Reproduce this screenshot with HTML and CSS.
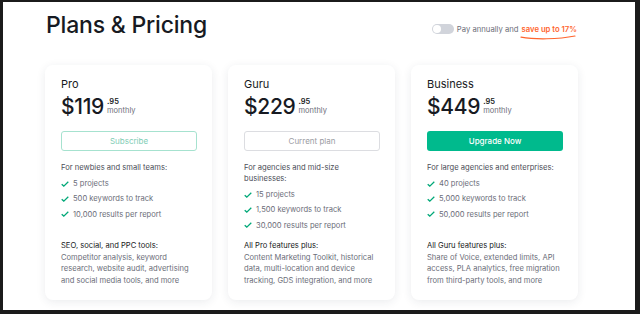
FILE: index.html
```html
<!DOCTYPE html>
<html lang="en">
<head>
    <meta charset="UTF-8">
    <meta name="viewport" content="width=device-width, initial-scale=1.0">
    <title>Plans &amp; Pricing</title>
    <link rel="stylesheet" href="styles.css">
</head>
<body>
    <div class="frame">
        <div class="header">
            <h1>Plans &amp; Pricing</h1>
            <div class="billing">
                <span class="toggle"><span class="knob"></span></span>
                <span>Pay annually and</span>
                <span class="save">save up to 17%
                    <svg class="swoosh" width="56" height="5" viewBox="0 0 56 5">
                        <path d="M1 2.2 C 15 4.6, 38 4.4, 55 1" fill="none" stroke="#ff642d" stroke-width="1.2" stroke-linecap="round"/>
                    </svg>
                </span>
            </div>
        </div>

        <div class="plans">
            <div class="card">
                <div class="plan-name">Pro</div>
                <div class="price">
                    <span class="amount">$119</span>
                    <span class="cents"><b>.95</b>monthly</span>
                </div>
                <button class="btn btn-outline" type="button">Subscribe</button>
                <p class="intro">For newbies and small teams:</p>
                <ul class="features">
                    <li><svg width="8" height="6" viewBox="0 0 8 6"><path d="M0.7 3.2 L2.8 5.1 L7.3 0.8" fill="none" stroke="#00a878" stroke-width="1.3"/></svg>5 projects</li>
                    <li><svg width="8" height="6" viewBox="0 0 8 6"><path d="M0.7 3.2 L2.8 5.1 L7.3 0.8" fill="none" stroke="#00a878" stroke-width="1.3"/></svg>500 keywords to track</li>
                    <li><svg width="8" height="6" viewBox="0 0 8 6"><path d="M0.7 3.2 L2.8 5.1 L7.3 0.8" fill="none" stroke="#00a878" stroke-width="1.3"/></svg>10,000 results per report</li>
                </ul>
                <div class="tools">
                    <div class="tools-title">SEO, social, and PPC tools:</div>
                    <p>Competitor analysis, keyword research, website audit, advertising and social media tools, and more</p>
                </div>
            </div>

            <div class="card">
                <div class="plan-name">Guru</div>
                <div class="price">
                    <span class="amount">$229</span>
                    <span class="cents"><b>.95</b>monthly</span>
                </div>
                <button class="btn btn-current" type="button">Current plan</button>
                <p class="intro">For agencies and mid-size businesses:</p>
                <ul class="features">
                    <li><svg width="8" height="6" viewBox="0 0 8 6"><path d="M0.7 3.2 L2.8 5.1 L7.3 0.8" fill="none" stroke="#00a878" stroke-width="1.3"/></svg>15 projects</li>
                    <li><svg width="8" height="6" viewBox="0 0 8 6"><path d="M0.7 3.2 L2.8 5.1 L7.3 0.8" fill="none" stroke="#00a878" stroke-width="1.3"/></svg>1,500 keywords to track</li>
                    <li><svg width="8" height="6" viewBox="0 0 8 6"><path d="M0.7 3.2 L2.8 5.1 L7.3 0.8" fill="none" stroke="#00a878" stroke-width="1.3"/></svg>30,000 results per report</li>
                </ul>
                <div class="tools">
                    <div class="tools-title">All Pro features plus:</div>
                    <p>Content Marketing Toolkit, historical data, multi-location and device tracking, GDS integration, and more</p>
                </div>
            </div>

            <div class="card">
                <div class="plan-name">Business</div>
                <div class="price">
                    <span class="amount">$449</span>
                    <span class="cents"><b>.95</b>monthly</span>
                </div>
                <button class="btn btn-primary" type="button">Upgrade Now</button>
                <p class="intro">For large agencies and enterprises:</p>
                <ul class="features">
                    <li><svg width="8" height="6" viewBox="0 0 8 6"><path d="M0.7 3.2 L2.8 5.1 L7.3 0.8" fill="none" stroke="#00a878" stroke-width="1.3"/></svg>40 projects</li>
                    <li><svg width="8" height="6" viewBox="0 0 8 6"><path d="M0.7 3.2 L2.8 5.1 L7.3 0.8" fill="none" stroke="#00a878" stroke-width="1.3"/></svg>5,000 keywords to track</li>
                    <li><svg width="8" height="6" viewBox="0 0 8 6"><path d="M0.7 3.2 L2.8 5.1 L7.3 0.8" fill="none" stroke="#00a878" stroke-width="1.3"/></svg>50,000 results per report</li>
                </ul>
                <div class="tools">
                    <div class="tools-title">All Guru features plus:</div>
                    <p>Share of Voice, extended limits, API access, PLA analytics, free migration from third-party tools, and more</p>
                </div>
            </div>
        </div>
    </div>
</body>
</html>
```

FILE: styles.css
```css
html, body {
    margin: 0;
    height: 100%;
}
body {
    background-color: #1b1b1b;
    font-family: Inter, "Noto Sans", Arial, sans-serif;
    color: #171a22;
    padding: 2px 5px 4px 3px;
    box-sizing: border-box;
}
.frame {
    background-color: #fff;
    height: 100%;
    padding: 0 58px 0 42px;
    box-sizing: border-box;
    overflow: hidden;
}
.header {
    display: flex;
    align-items: center;
    justify-content: space-between;
    height: 50px;
    padding-bottom: 13px;
}
h1 {
    margin: 0 0 0 1px;
    font-size: 23px;
    font-weight: 500;
    letter-spacing: -0.2px;
    padding-bottom: 4px;
}
.billing {
    display: flex;
    align-items: center;
    font-size: 7.7px;
    color: #6c6e79;
    padding-top: 4px;
}
.toggle {
    width: 22px;
    height: 10px;
    border-radius: 5px;
    background-color: #d1d4db;
    margin-right: 3px;
    position: relative;
}
.knob {
    position: absolute;
    left: 1px;
    top: 1px;
    width: 8px;
    height: 8px;
    border-radius: 50%;
    background-color: #fff;
}
.save {
    color: #ff642d;
    font-weight: 600;
    margin-left: 3px;
    position: relative;
}
.swoosh {
    position: absolute;
    left: -2px;
    top: 10px;
}
.plans {
    display: flex;
    gap: 16px;
}
.card {
    width: 167px;
    height: 235px;
    box-sizing: border-box;
    padding: 12px 15px 14px 16px;
    border-radius: 8px;
    background-color: #fff;
    box-shadow: 0 2px 10px rgba(30, 40, 70, 0.09);
    display: flex;
    flex-direction: column;
}
.plan-name {
    font-size: 11px;
    line-height: 14px;
}
.price {
    display: flex;
    align-items: flex-start;
    margin-top: 4px;
}
.amount {
    font-size: 21px;
    line-height: 24px;
    font-weight: 500;
    letter-spacing: -0.3px;
}
.cents {
    display: flex;
    flex-direction: column;
    font-size: 7.5px;
    line-height: 9px;
    color: #6c6e79;
    margin: 2px 0 0 3px;
}
.cents b {
    color: #171a22;
    font-weight: 600;
}
.btn {
    width: 136px;
    height: 20px;
    margin-top: 12px;
    border-radius: 3px;
    font-family: inherit;
    font-size: 8px;
    padding: 0;
    background: #fff;
}
.btn-outline {
    border: 1px solid #a6e2cf;
    color: #7fcdb5;
}
.btn-current {
    border: 1px solid #dcdde1;
    color: #9b9ca3;
}
.btn-primary {
    border: none;
    background-color: #00ba8d;
    color: #fff;
    font-weight: 500;
}
.intro {
    margin: 11px 0 0;
    font-size: 7.6px;
    line-height: 11px;
    color: #4b4d57;
}
.features {
    list-style: none;
    margin: 3px 0 0;
    padding: 0;
}
.features li {
    display: flex;
    align-items: center;
    font-size: 7.6px;
    line-height: 15.3px;
    color: #6c6e79;
}
.features svg {
    margin-right: 4px;
}
.tools {
    margin-top: auto;
    font-size: 7.6px;
    line-height: 11.4px;
}
.tools-title {
    color: #171a22;
}
.tools p {
    margin: 0;
    color: #6c6e79;
}
```
